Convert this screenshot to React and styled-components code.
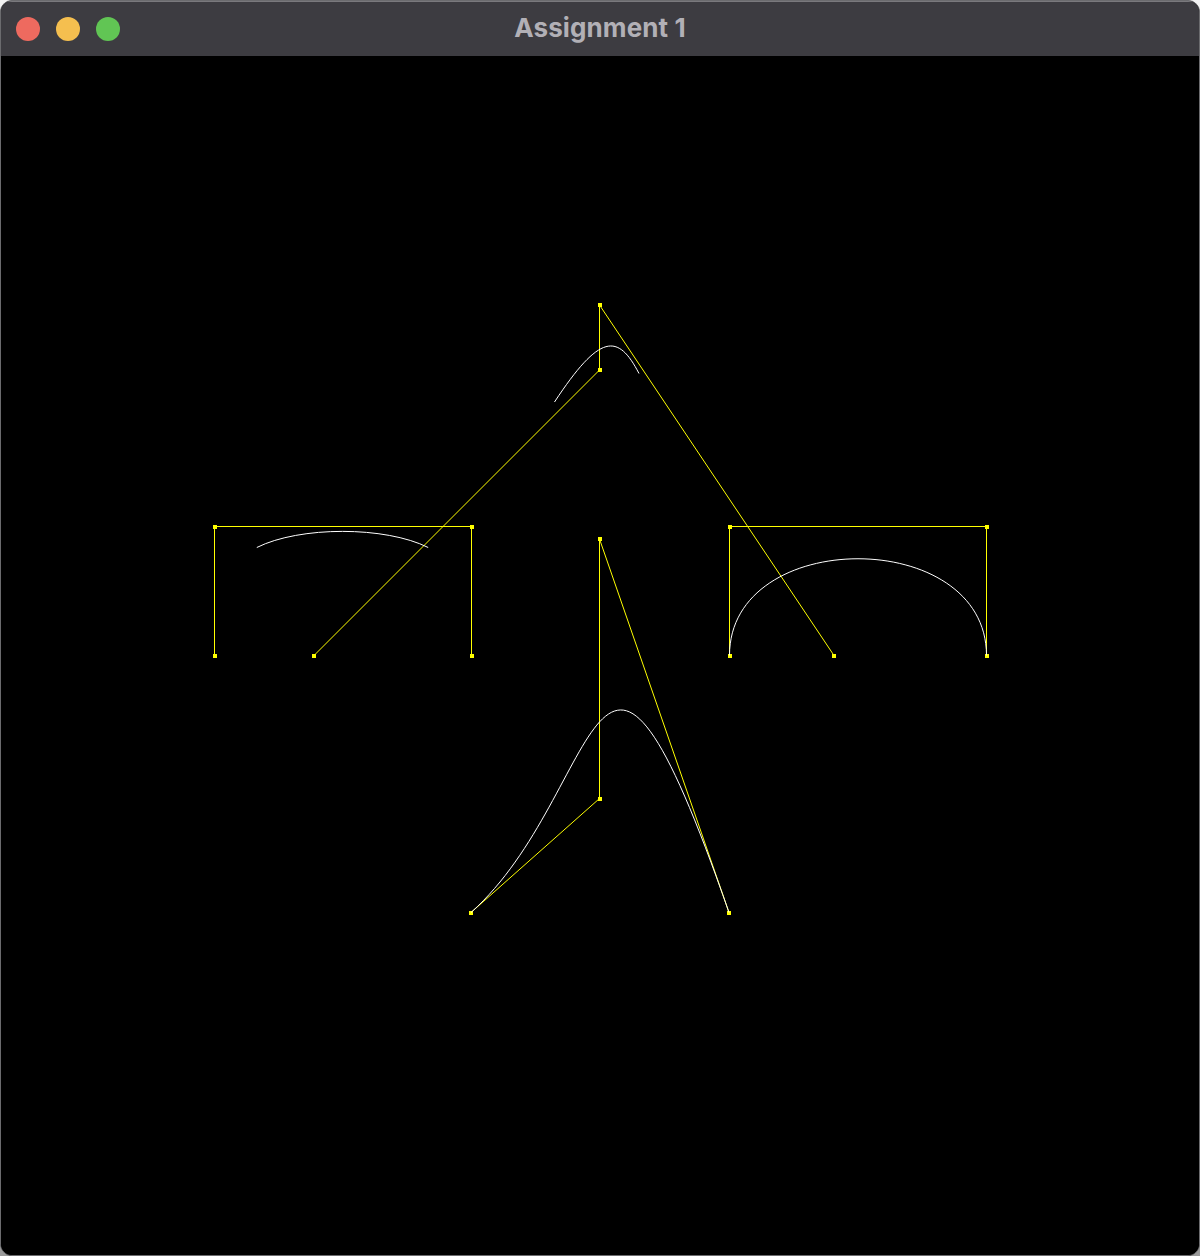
import styled, { createGlobalStyle } from 'styled-components';

const GlobalStyle = createGlobalStyle`
  html, body {
    margin: 0;
    padding: 0;
    background: linear-gradient(#f2f2f2, #9a9a9a);
  }
`;

// control polygons, in page pixels
const polygons = [
  { id: 'top', points: [[314, 655.5], [599.5, 370], [599.5, 305], [834, 655.5]] },
  { id: 'left', points: [[214.5, 655.5], [214.5, 526.5], [471.5, 526.5], [471.5, 655.5]] },
  { id: 'right', points: [[729.5, 655.5], [729.5, 526.5], [986.5, 526.5], [986.5, 655.5]] },
  { id: 'bottom', points: [[471, 912.5], [599.5, 798.5], [599.5, 539], [729, 912.5]] },
];

const curves = [
  'M554.5 402 C600 333 618 333 639 373.5',
  'M256.8 547.5 C299.7 526 385.3 526 428.2 547.5',
  'M729.5 655.5 C729.5 526.5 986.5 526.5 986.5 655.5',
  'M471 912.5 C605.4 792.3 593.8 524.1 729 912.5',
];

const App = () => (
  <>
    <GlobalStyle />
    <Window>
      <TitleBar>
        <Lights>
          <Light $color="#ee6a5f" />
          <Light $color="#f5bf4f" />
          <Light $color="#61c554" />
        </Lights>
        <Title>Assignment 1</Title>
      </TitleBar>
      <Canvas>
        <svg width="1198" height="1199" viewBox="1 56 1198 1199">
          {polygons.map(({ id, points }) => (
            <g key={id}>
              <polyline
                points={points.map((p) => p.join(',')).join(' ')}
                fill="none"
                stroke="#ffff00"
                strokeWidth="1"
              />
              {points.map(([x, y], i) => (
                <rect
                  key={i}
                  x={Math.round(x - 2)}
                  y={Math.round(y - 2)}
                  width="4"
                  height="4"
                  fill="#ffff00"
                  shapeRendering="crispEdges"
                />
              ))}
            </g>
          ))}
          {curves.map((d, i) => (
            <path key={i} d={d} fill="none" stroke="#ffffff" strokeWidth="1" />
          ))}
        </svg>
      </Canvas>
    </Window>
  </>
);

const Window = styled.div`
  box-sizing: border-box;
  width: 1200px;
  height: 1256px;
  display: flex;
  flex-direction: column;
  border: 1px solid #6b6b6e;
  border-radius: 12px;
  overflow: hidden;
  background: #000;
`;

const TitleBar = styled.div`
  position: relative;
  height: 55px;
  flex: none;
  display: flex;
  align-items: center;
  justify-content: center;
  padding-bottom: 3px;
  background: #3d3c41;
  border-top: 1px solid #7a797d;
  box-sizing: border-box;
`;

const Lights = styled.div`
  position: absolute;
  left: 15px;
  top: 15px;
  display: flex;
  gap: 16px;
`;

const Light = styled.span`
  width: 24px;
  height: 24px;
  border-radius: 50%;
  background: ${({ $color }) => $color};
`;

const Title = styled.div`
  font-family: Inter, "Liberation Sans", sans-serif;
  font-weight: 700;
  font-size: 26px;
  color: #b2b0b6;
  letter-spacing: 0.1px;
`;

const Canvas = styled.div`
  flex: 1;
  background: #000;
  line-height: 0;

  svg {
    display: block;
  }
`;

export default App;
